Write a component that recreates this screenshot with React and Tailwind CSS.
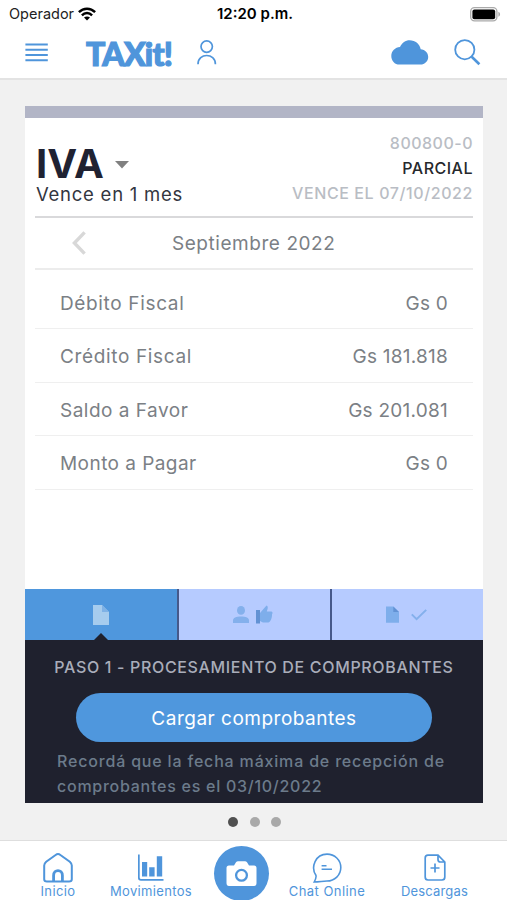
import clsx from 'clsx';

const rows = [
  { label: 'Débito Fiscal', value: 'Gs 0', tracking: 'tracking-[0.65px]' },
  { label: 'Crédito Fiscal', value: 'Gs 181.818', tracking: 'tracking-[0.65px]' },
  { label: 'Saldo a Favor', value: 'Gs 201.081', tracking: 'tracking-[0.5px]' },
  { label: 'Monto a Pagar', value: 'Gs 0', tracking: 'tracking-[0.45px]' },
];

function WifiIcon() {
  return (
    <svg width="18" height="14" viewBox="0 0 18 14" fill="none" stroke="#000" strokeWidth="2.4">
      <path d="M0.9 5.2C5.5 0.5 12.5 0.5 17.1 5.2" />
      <path d="M3.9 8.3C6.8 5.3 11.2 5.3 14.1 8.3" />
      <path d="M9 13.6L6 10.6C7.7 9 10.3 9 12 10.6Z" fill="#000" stroke="none" />
    </svg>
  );
}

function BatteryIcon() {
  return (
    <svg width="31" height="15" viewBox="0 0 31 15">
      <rect x="0.7" y="0.7" width="26.2" height="13.2" rx="3.8" fill="#fff" stroke="#aaa" strokeWidth="1.3" />
      <rect x="2.4" y="2.4" width="22.8" height="9.8" rx="2" fill="#000" />
      <path d="M28.4 4.8C30.6 5.6 30.6 9 28.4 9.8Z" fill="#aaa" />
    </svg>
  );
}

function MenuIcon() {
  return (
    <svg width="23" height="19" viewBox="0 0 23 19" stroke="#4f95db" strokeWidth="2">
      <path d="M0.4 1.5H22.8M0.4 6.8H22.8M0.4 12H22.8M0.4 17.2H22.8" />
    </svg>
  );
}

function UserIcon() {
  return (
    <svg width="20" height="25" viewBox="0 0 20 25" fill="none" stroke="#4f95db" strokeWidth="1.7">
      <circle cx="9.7" cy="6.6" r="5.7" />
      <path d="M1 24.2C1 12.6 18.4 12.6 18.4 24.2" />
    </svg>
  );
}

function CloudIcon() {
  return (
    <svg width="38" height="25" viewBox="0 0 38 25" fill="#4f95db">
      <path d="M8.5 24.6C3.6 24.6 0.3 20.6 0.3 15.9C0.3 11 4.2 7.4 9 7C11 2.8 14.5 0.3 18.6 0.3C24.3 0.3 29 4.2 29.7 9.3C34 9.6 37.2 12.8 37.2 17C37.2 21.2 33.8 24.6 29.4 24.6Z" />
    </svg>
  );
}

function SearchIcon() {
  return (
    <svg width="27" height="27" viewBox="0 0 27 27" fill="none" stroke="#4f95db">
      <circle cx="10.8" cy="10.7" r="9.6" strokeWidth="1.8" />
      <path d="M17.7 17.8L25.4 25.2" strokeWidth="2.6" />
    </svg>
  );
}

function FileIcon({ fill, fold, className }) {
  return (
    <svg viewBox="0 0 16 20" className={className}>
      <path d="M0 0H9L16 7V20H0Z" fill={fill} />
      <path d="M9 0L16 7H9Z" fill={fold} />
    </svg>
  );
}

function StatusBar() {
  return (
    <div className="flex h-7 items-center justify-between pl-[9px] pr-[6px] text-[#222]">
      <div className="flex w-[160px] items-center gap-[4px]">
        <span className="text-[14.5px] tracking-[0px]">Operador</span>
        <WifiIcon />
      </div>
      <span className="text-[15px] font-semibold tracking-[0px] text-black">12:20 p.m.</span>
      <div className="flex w-[160px] justify-end">
        <BatteryIcon />
      </div>
    </div>
  );
}

function Header() {
  return (
    <header className="h-[80px] border-b-2 border-[#e3e3e3] bg-white">
      <StatusBar />
      <div className="flex h-[48px] items-center pl-[25px] pr-[26px]">
        <MenuIcon />
        <span className="ml-[38px] w-[87px] whitespace-nowrap pt-[3px] font-['Lato'] text-[32px] font-black leading-none tracking-[-0.8px] text-[#4f95db] [-webkit-text-stroke:1.2px_#4f95db]">
          TAXit!
        </span>
        <div className="ml-[24px]">
          <UserIcon />
        </div>
        <div className="ml-auto flex items-center gap-[25px]">
          <CloudIcon />
          <SearchIcon />
        </div>
      </div>
    </header>
  );
}

function Steps() {
  return (
    <div className="flex h-[51px]">
      <div className="relative flex w-[152px] items-center justify-center bg-[#4f97dd]">
        <FileIcon fill="#a6ccee" fold="#7fb2e6" className="h-5 w-4" />
        {/* Active step marker */}
        <svg className="absolute bottom-0 left-[69px]" width="14" height="7" viewBox="0 0 14 7">
          <path d="M0 7L7 0L14 7Z" fill="#1f212e" />
        </svg>
      </div>
      <div className="flex w-[153px] items-center justify-center gap-[7px] border-l-2 border-[#46598a] bg-[#b6cbff] pr-[3px]">
        <svg width="16" height="17" viewBox="0 0 16 17" fill="#84b0ec">
          <ellipse cx="8" cy="4.4" rx="4" ry="4.4" />
          <path d="M0 17V14.4C0 12 3 10.6 8 10.6C13 10.6 16 12 16 14.4V17Z" />
        </svg>
        <svg width="17" height="19" viewBox="0 0 17 19">
          <rect x="0" y="5" width="4" height="13.5" fill="#6292d4" />
          <path d="M4 8L10.5 0.5C12.8 1.4 11.4 4.6 10.8 6.6H15.5C16.8 6.8 16.8 8.4 16 9.6C16.2 13 14.5 17 12.5 17.6H7L4 16Z" fill="#7eaeeb" />
        </svg>
      </div>
      <div className="flex flex-1 items-center justify-center gap-[12px] border-l-2 border-[#46598a] bg-[#b6cbff] pr-[2px]">
        <FileIcon fill="#7eaeeb" fold="#6292d4" className="h-[17px] w-[13px]" />
        <svg width="16" height="12" viewBox="0 0 16 12" fill="none" stroke="#84b0ec" strokeWidth="2">
          <path d="M0.8 5.4L5.6 10.2L15.2 0.9" />
        </svg>
      </div>
    </div>
  );
}

function TaxCard() {
  return (
    <section className="flex h-[697px] flex-col bg-white">
      <div className="h-3 bg-[#b2b5c6]" />

      <div className="mx-[10px] flex h-[100px] justify-between border-b-2 border-[#d9d9db] pl-px">
        <div className="pt-[27px]">
          <div className="flex h-[38px] items-center">
            <h1 className="w-[68px] text-[40px] font-bold leading-none text-[#1f2232]">IVA</h1>
            <svg className="ml-[11px] mt-px" width="14" height="8" viewBox="0 0 14 8">
              <path d="M0 0H14L7 7.5Z" fill="#808080" />
            </svg>
          </div>
          <p className="mt-px whitespace-nowrap text-[18.5px] leading-5 tracking-[0.75px] text-[#33363f]">Vence en 1 mes</p>
        </div>
        <div className="pt-[13px] text-right text-[16px] font-medium leading-[25px] text-[#b9bdc4]">
          <p className="tracking-[0.5px]">800800-0</p>
          <p className="tracking-[0.5px] text-[#26282c]">PARCIAL</p>
          <p className="whitespace-nowrap tracking-[0.6px]">VENCE EL 07/10/2022</p>
        </div>
      </div>

      <div className="mx-[10px] flex h-[52px] items-center border-b-2 border-[#ececec] pl-[37px]">
        <svg width="14" height="24" viewBox="0 0 14 24" fill="none" stroke="#d8d8d8" strokeWidth="3.4">
          <path d="M12.6 1.4L2.4 12L12.6 22.6" />
        </svg>
        <span className="ml-[86px] whitespace-nowrap pt-[3px] text-[19px] tracking-[0.55px] text-[#7b8085]">Septiembre 2022</span>
      </div>

      <div className="mx-[10px] pt-[6px]">
        {rows.map((row) => (
          <div
            key={row.label}
            className="flex h-[53.4px] items-center justify-between border-b border-[#efefef] px-[25px] pt-[4px] text-[19px] text-[#7b8085]"
          >
            <span className={clsx('whitespace-nowrap', row.tracking)}>{row.label}</span>
            <span className="tracking-[0.25px]">{row.value}</span>
          </div>
        ))}
      </div>

      <div className="mt-auto">
        <Steps />
        <div className="h-[163px] bg-[#1f212e] pt-[15px]">
          <h2 className="whitespace-nowrap text-center text-[16px] font-medium leading-6 tracking-[0.66px] text-[#a9adba]">
            PASO 1 - PROCESAMIENTO DE COMPROBANTES
          </h2>
          <button className="mx-auto mt-[14px] block h-[49px] w-[356px] rounded-full bg-[#4f97dd] pt-[3px] text-[19px] tracking-[0.5px] text-white">
            Cargar comprobantes
          </button>
          <p className="ml-8 mt-[7px] whitespace-nowrap text-[16px] font-medium leading-[24.5px] tracking-[0.82px] text-[#6c7b8b]">
            Recordá que la fecha máxima de recepción de
            <br />
            <span className="tracking-[0.74px]">comprobantes es el 03/10/2022</span>
          </p>
        </div>
      </div>
    </section>
  );
}

function NavItem({ label, tracking, className, children }) {
  return (
    <a className={clsx('flex flex-col items-center', className)}>
      <div className="flex h-[30px] items-start">{children}</div>
      <span className={clsx('whitespace-nowrap text-[13px] leading-4', tracking)}>{label}</span>
    </a>
  );
}

function BottomNav() {
  return (
    <nav className="flex h-[60px] border-t border-[#dedede] bg-white pt-[12px] text-[#4f95db]">
      <NavItem label="Inicio" tracking="tracking-[0.4px]" className="ml-[18px] w-[80px]">
        <svg width="30" height="30" viewBox="0 0 30 30" fill="none" stroke="currentColor" strokeWidth="2">
          <path d="M1.2 26.2V12.5C1.2 10.8 2 9.9 3.2 8.8L12.6 2C14 0.9 16 0.9 17.4 2L26.8 8.8C28 9.9 28.8 10.8 28.8 12.5V26.2C28.8 28 27.8 28.4 26 28.4H4C2.2 28.4 1.2 28 1.2 26.2Z" />
          <path d="M10.6 28.4V22.5C10.6 16 19.4 16 19.4 22.5V28.4" strokeWidth="2.8" />
        </svg>
      </NavItem>
      <NavItem label="Movimientos" tracking="tracking-[0.35px]" className="ml-[5px] w-[96px]">
        <svg className="mt-[1px]" width="26" height="28" viewBox="0 0 26 28" fill="currentColor">
          <path d="M0 0.5H1.7V23.5Q1.7 25 3.2 25H25.5V26.8H3C1 26.8 0 25.8 0 24Z" />
          <path d="M4 8H9.2V22.5H4ZM11.2 13.3H16.6V22.5H11.2ZM18.8 2.3H24.2V22.5H18.8Z" />
        </svg>
      </NavItem>
      <div className="-mt-[7px] ml-[15px] flex h-[55px] w-[55px] shrink-0 items-center justify-center rounded-full bg-[#4f95db]">
        <svg width="31" height="26" viewBox="0 0 31 26">
          <path d="M3 4.5H8L10 1.3Q10.8 0.3 12 0.3H19Q20.2 0.3 21 1.3L23 4.5H28Q30.5 4.5 30.5 7V22Q30.5 25 28 25H3Q0.5 25 0.5 22V7Q0.5 4.5 3 4.5Z" fill="#fff" />
          <circle cx="15.5" cy="14.3" r="5.4" fill="#fff" stroke="#4f95db" strokeWidth="2.3" />
        </svg>
      </div>
      <NavItem label="Chat Online" tracking="tracking-[0.45px]" className="ml-[10px] w-[96px]">
        <svg width="30" height="30" viewBox="0 0 30 30" fill="none" stroke="currentColor" strokeWidth="1.6">
          <path d="M3.9 22.3C-1.5 14 3.4 1.1 15 1.1C22.7 1.1 28.8 7 28.8 14.5C28.8 22 22.7 28 15 28C12 28 7 28.8 2.2 29C3.5 26.5 4.6 24 3.9 22.3Z" />
          <path d="M9.6 12.7H14.5M9.6 16.3H20" />
        </svg>
      </NavItem>
      <NavItem label="Descargas" tracking="tracking-[0.15px]" className="ml-[17px] w-[85px]">
        <svg className="mt-[1px]" width="22" height="28" viewBox="0 0 22 28" fill="none" stroke="currentColor" strokeWidth="1.7">
          <path d="M14 1.2H4C2.2 1.2 1.2 2.2 1.2 4V23C1.2 25 2.2 26 4 26H18C19.8 26 20.8 25 20.8 23V8L14 1.2ZM14 1.2V5.5C14 7 15 8 16.5 8H20.8" />
          <path d="M11 9.5V18.5M6.5 14H15.5" />
        </svg>
      </NavItem>
    </nav>
  );
}

export default function App() {
  return (
    <div className="flex h-[900px] w-[507px] flex-col overflow-hidden bg-[#f1f1f1] font-['Inter',sans-serif]">
      <Header />
      <main className="flex-1 pl-[25px] pr-[24px] pt-[26px]">
        <TaxCard />
        <div className="mt-[14px] flex justify-center gap-[11.5px] pl-px">
          <span className="h-[10px] w-[10px] rounded-full bg-[#505050]" />
          <span className="h-[10px] w-[10px] rounded-full bg-[#a9a9a9]" />
          <span className="h-[10px] w-[10px] rounded-full bg-[#a9a9a9]" />
        </div>
      </main>
      <BottomNav />
    </div>
  );
}
